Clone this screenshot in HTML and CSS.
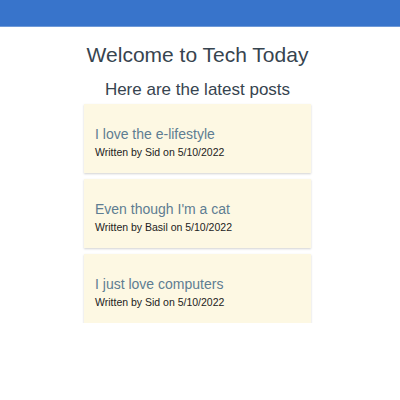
FILE: index.html
```html
<!DOCTYPE html>
<html>
<head>
<meta charset="utf-8">
<link rel="stylesheet" href="styles.css">
</head>
<body>
<header class="topbar"></header>
<main class="content">
  <h1 class="title">Welcome to Tech Today</h1>
  <h2 class="subtitle">Here are the latest posts</h2>
  <section class="posts">
    <article class="post">
      <h3 class="post-title">I love the e-lifestyle</h3>
      <p class="post-meta">Written by Sid on 5/10/2022</p>
    </article>
    <article class="post">
      <h3 class="post-title">Even though I'm a cat</h3>
      <p class="post-meta">Written by Basil on 5/10/2022</p>
    </article>
    <article class="post">
      <h3 class="post-title">I just love computers</h3>
      <p class="post-meta">Written by Sid on 5/10/2022</p>
    </article>
  </section>
</main>
</body>
</html>
```
FILE: styles.css
```css
html, body {
  margin: 0;
  padding: 0;
  background: #ffffff;
  font-family: "Liberation Sans", Arial, sans-serif;
}
.topbar {
  height: 26px;
  background: #3874cb;
  border-bottom: 1px solid #6f9ad8;
}
.content {
  display: flex;
  flex-direction: column;
  align-items: center;
  padding-right: 5px;
}
.title {
  margin: 14px 0 0;
  font-size: 21px;
  font-weight: 400;
  color: #37444f;
  line-height: 28px;
}
.subtitle {
  margin: 10px 0 0;
  font-size: 17px;
  font-weight: 400;
  color: #37444f;
  line-height: 22px;
}
.posts {
  margin-top: 3px;
  width: 227px;
  display: flex;
  flex-direction: column;
  gap: 6px;
}
.post {
  background: #fdf8e3;
  box-shadow: 0 1px 2px rgba(0,0,0,0.18);
  padding: 21px 11px 14px;
  height: 34px;
}
.post-title {
  margin: 0;
  font-size: 14px;
  font-weight: 400;
  color: #5e7d92;
  line-height: 18px;
}
.post-meta {
  margin: 3px 0 0;
  font-size: 10.5px;
  color: #222;
  line-height: 13px;
}
```
